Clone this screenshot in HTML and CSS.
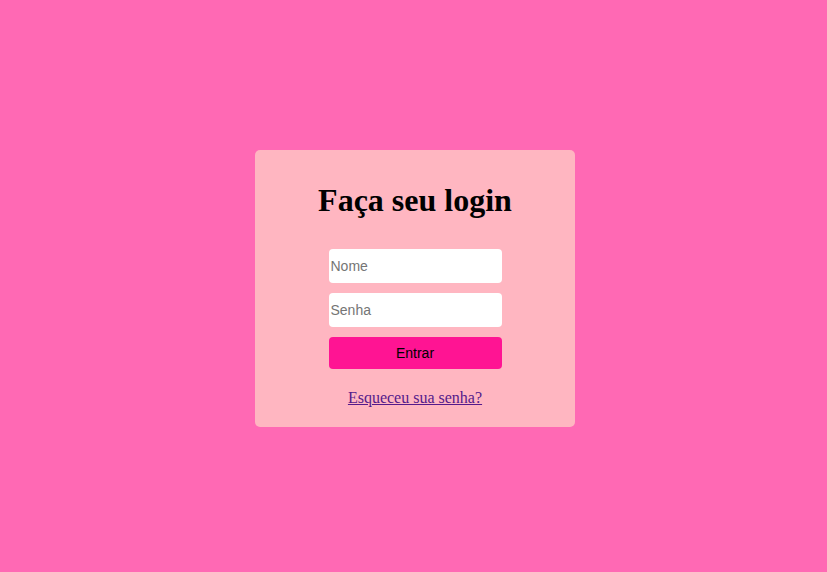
FILE: index.html
```html
<!DOCTYPE html>
<html lang="pt">
<head>
<meta charset="utf-8">
<title>Login</title>
<link rel="stylesheet" href="styles.css">
</head>
<body>
<div class="card">
  <h1 class="title">Faça seu login</h1>
  <form class="form">
    <input class="field" type="text" placeholder="Nome">
    <input class="field" type="password" placeholder="Senha">
    <button class="btn" type="button">Entrar</button>
  </form>
  <a class="link" href="#">Esqueceu sua senha?</a>
</div>
</body>
</html>
```

FILE: styles.css
```css
html, body {
  margin: 0;
  height: 100%;
}
body {
  box-sizing: border-box;
  padding: 4px 0 0 3px;
  background: #ff69b4;
  display: flex;
  align-items: center;
  justify-content: center;
  font-family: "Liberation Serif", "Times New Roman", serif;
}
.card {
  width: 320px;
  height: 277px;
  box-sizing: border-box;
  background: #ffb6c1;
  border-radius: 5px;
  display: flex;
  flex-direction: column;
  align-items: center;
  padding-top: 32px;
}
.title {
  margin: 0;
  font-size: 32px;
  font-weight: bold;
  line-height: 37px;
}
.form {
  display: flex;
  flex-direction: column;
  gap: 10px;
  margin-top: 30px;
}
.field {
  width: 173px;
  height: 34px;
  box-sizing: border-box;
  border: none;
  border-radius: 4px;
  padding: 0 2px;
  background: #fff;
  font-family: "Liberation Sans", Arial, sans-serif;
  font-size: 14px;
  outline: none;
}
.field::placeholder {
  color: #757575;
}
.btn {
  width: 173px;
  height: 32px;
  border: none;
  border-radius: 4px;
  background: #ff1493;
  color: #000;
  font-family: "Liberation Sans", Arial, sans-serif;
  font-size: 14px;
}
.link {
  margin-top: 20px;
  color: #551a8b;
  font-size: 16px;
}
```
